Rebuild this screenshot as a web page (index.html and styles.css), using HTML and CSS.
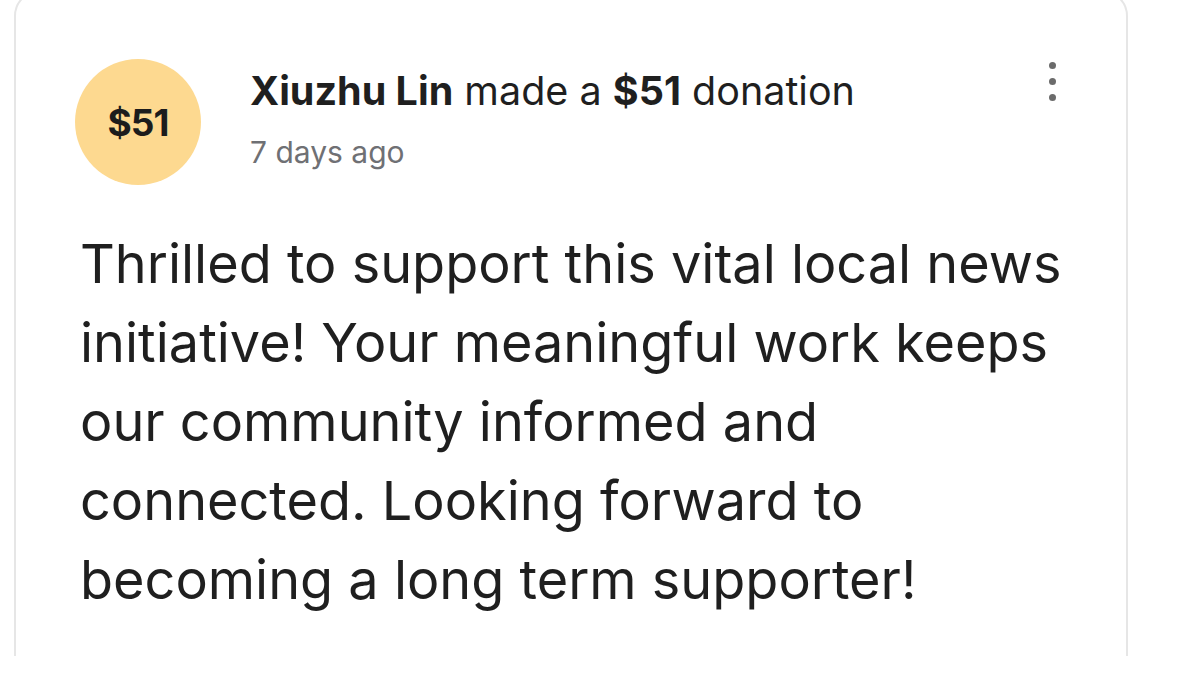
FILE: index.html
```html
<!DOCTYPE html>
<html lang="en">
<head>
<meta charset="utf-8">
<title>Donation</title>
<link rel="stylesheet" href="styles.css">
</head>
<body>
<div class="viewport">
  <article class="card">
    <header class="head">
      <div class="avatar">$51</div>
      <div class="meta">
        <p class="title"><b>Xiuzhu Lin</b> made a <b>$51</b> donation</p>
        <p class="time">7 days ago</p>
      </div>
      <button class="more" aria-label="More options">
        <span class="dot"></span><span class="dot"></span><span class="dot"></span>
      </button>
    </header>
    <p class="message">Thrilled to support this vital local news initiative! Your meaningful work keeps our community informed and connected. Looking forward to becoming a long term supporter!</p>
  </article>
</div>
</body>
</html>
```

FILE: styles.css
```css
html, body {
  margin: 0;
  padding: 0;
  background: #ffffff;
}
.viewport {
  height: 656px;
  overflow: hidden;
  padding-left: 14px;
}
.card {
  width: 1114px;
  box-sizing: border-box;
  margin-top: -10px;
  border: 2px solid #e6e6e6;
  border-radius: 26px;
  padding: 67px 60px 200px 59px;
  background: #fff;
  font-family: Inter, "Noto Sans", sans-serif;
  color: #1f1f1f;
}
.head {
  display: flex;
  align-items: flex-start;
}
.avatar {
  width: 126px;
  height: 126px;
  border-radius: 50%;
  background: #fdd990;
  flex: none;
  display: flex;
  align-items: center;
  justify-content: center;
  font-weight: 700;
  font-size: 37px;
  letter-spacing: -1px;
  color: #1c1c1c;
}
.meta {
  flex: 1;
  margin-left: 49px;
  padding-top: 8px;
}
.title {
  margin: 0;
  font-size: 39.5px;
  line-height: 48px;
  color: #1f1f1f;
}
.title b { font-weight: 700; }
.time {
  margin: 19px 0 0 0;
  font-size: 30px;
  line-height: 36px;
  color: #6f7074;
}
.more {
  flex: none;
  width: 20px;
  margin: 3px 4px 0 0;
  padding: 0;
  border: 0;
  background: none;
  display: flex;
  flex-direction: column;
  align-items: center;
  gap: 9px;
}
.dot {
  width: 7px;
  height: 7px;
  border-radius: 50%;
  background: #6b6b6b;
}
.message {
  margin: 39px 0 0 5px;
  font-size: 54px;
  line-height: 79px;
  color: #1f1f1f;
  max-width: 1000px;
}
```
